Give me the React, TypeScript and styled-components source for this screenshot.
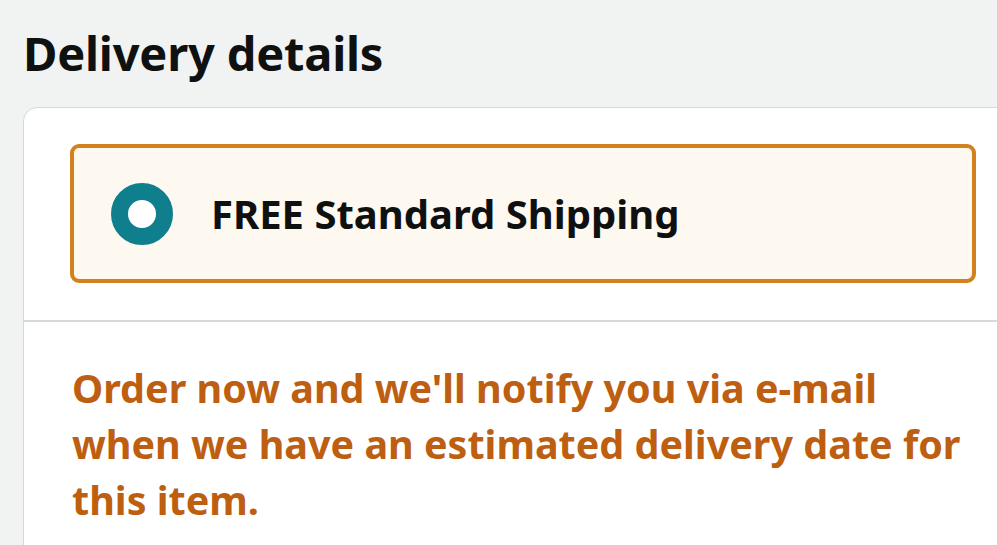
import React from 'react';
import styled, { createGlobalStyle } from 'styled-components';

const GlobalStyle = createGlobalStyle`
  html, body {
    margin: 0;
    padding: 0;
    background: #f1f2f2;
    overflow: hidden;
  }
  body {
    font-family: "Noto Sans", "Open Sans", Arial, sans-serif;
  }
`;

const Page = styled.div`
  width: 997px;
  height: 545px;
  overflow: hidden;
  padding: 23px 0 0 23px;
  box-sizing: border-box;
`;

const Title = styled.h1`
  margin: 0;
  font-size: 47px;
  line-height: 60px;
  font-weight: 700;
  color: #0f1111;
  letter-spacing: -0.2px;
`;

const Card = styled.section`
  margin-top: 24px;
  width: 1000px;
  min-height: 520px;
  background: #fff;
  border: 1px solid #d5d9d9;
  border-radius: 14px;
`;

const OptionSection = styled.div`
  padding: 36px 0 37px 46px;
  border-bottom: 2px solid #d5d9d9;
`;

const OptionBox = styled.label<{ $selected?: boolean }>`
  display: flex;
  align-items: center;
  gap: 38px;
  width: 906px;
  height: 139px;
  box-sizing: border-box;
  padding-left: 37px;
  border: 4px solid ${({ $selected }) => ($selected ? '#d3801f' : '#d5d9d9')};
  border-radius: 9px;
  background: ${({ $selected }) => ($selected ? '#fdf8f0' : '#fff')};
`;

const Radio = styled.span<{ $checked?: boolean }>`
  width: 62px;
  height: 62px;
  box-sizing: border-box;
  border-radius: 50%;
  border: ${({ $checked }) => ($checked ? '17px solid #0f7f8e' : '3px solid #888c8c')};
  background: #fff;
  flex-shrink: 0;
`;

const OptionLabel = styled.span`
  font-size: 40px;
  font-weight: 700;
  color: #0f1111;
`;

const Notice = styled.p`
  margin: 0;
  padding: 38px 0 0 48px;
  font-size: 39.5px;
  line-height: 56px;
  font-weight: 700;
  color: #bd5e10;
  max-width: 900px;
`;

export default function App() {
  return (
    <>
      <GlobalStyle />
      <Page>
        <Title>Delivery details</Title>
        <Card>
          <OptionSection>
            <OptionBox $selected>
              <Radio $checked />
              <OptionLabel>FREE Standard Shipping</OptionLabel>
            </OptionBox>
          </OptionSection>
          <Notice>
            Order now and we'll notify you via e-mail when we have an estimated delivery date for
            this item.
          </Notice>
        </Card>
      </Page>
    </>
  );
}
